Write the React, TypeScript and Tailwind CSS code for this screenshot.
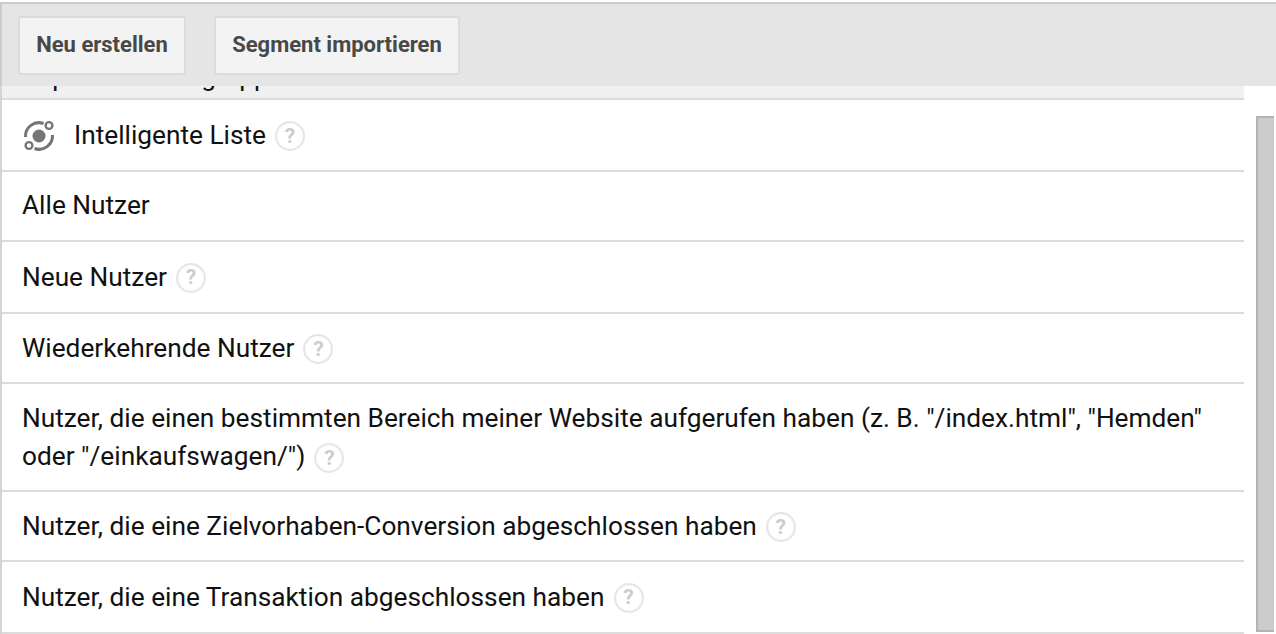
import React from "react";

const HelpIcon: React.FC = () => (
  <span className="ml-[9px] inline-flex h-[30px] w-[30px] shrink-0 items-center justify-center rounded-full border-2 border-[#e6e6e6] bg-white align-middle text-[21px] font-bold leading-none text-[#cccccc] shadow-[inset_0_0_2px_#eeeeee]">
    ?
  </span>
);

const SmartListIcon: React.FC = () => (
  <svg width="34" height="34" viewBox="0 0 34 34" fill="none" className="mr-[18px] shrink-0">
    <circle cx="17" cy="17" r="6.5" fill="#757575" />
    <path d="M3.5 18a13.5 13.5 0 0 1 18-13.5" stroke="#757575" strokeWidth="3" />
    <path d="M30.5 16a13.5 13.5 0 0 1-18 13.5" stroke="#757575" strokeWidth="3" />
    <circle cx="27" cy="6.5" r="3.4" stroke="#757575" strokeWidth="2.4" fill="white" />
    <circle cx="7" cy="26.5" r="3.4" stroke="#757575" strokeWidth="2.4" fill="white" />
  </svg>
);

const Row: React.FC<{ h: string; children: React.ReactNode }> = ({ h, children }) => (
  <div className={`flex items-center border-b-2 border-[#dcdcdc] pl-[20px] text-[26.25px] text-[#111111] ${h}`}>
    {children}
  </div>
);

export default function App() {
  return (
    <div className="h-[634px] w-[1276px] overflow-hidden bg-white pt-[2px] font-['Roboto',sans-serif]">
      {/* Toolbar */}
      <div className="flex h-[84px] items-start gap-[28px] border-t-2 border-l-2 border-[#cccccc] bg-[#e5e5e5] pl-[16px] pt-[12px]">
        <button className="h-[59px] w-[168px] rounded-[3px] border-2 border-[#dcdcdc] bg-[#f3f3f3] pb-[2px] text-[22px] font-bold text-[#484848]">
          Neu erstellen
        </button>
        <button className="h-[59px] w-[246px] rounded-[3px] border-2 border-[#dcdcdc] bg-[#f3f3f3] pb-[2px] text-[22px] font-bold text-[#484848]">
          Segment importieren
        </button>
      </div>

      <div className="flex">
        {/* List */}
        <div className="w-[1244px] shrink-0 border-l-2 border-[#d4d4d4]">
          <div className="h-[14px] overflow-hidden border-b-2 border-[#dcdcdc] bg-[#f0f0f0] pl-[20px] text-[26.25px] leading-[30px] text-[#111111]">
            <div className="-mt-[24px]">Importierte Zielgruppe</div>
          </div>
          <Row h="h-[72px] pt-[2px]">
            <SmartListIcon />
            Intelligente Liste
            <HelpIcon />
          </Row>
          <Row h="h-[70px]">Alle Nutzer</Row>
          <Row h="h-[72px] pt-[1px]">
            Neue Nutzer
            <HelpIcon />
          </Row>
          <Row h="h-[70px] pt-[2px]">
            Wiederkehrende Nutzer
            <HelpIcon />
          </Row>
          <div className="flex h-[108px] items-center border-b-2 border-[#dcdcdc] pl-[20px] pr-[30px] text-[26.25px] leading-[38px] text-[#111111]">
            <div>
              Nutzer, die einen bestimmten Bereich meiner Website aufgerufen haben (z. B. "/index.html", "Hemden" oder "/einkaufswagen/")
              <HelpIcon />
            </div>
          </div>
          <Row h="h-[70px] pt-[2px]">
            Nutzer, die eine Zielvorhaben-Conversion abgeschlossen haben
            <HelpIcon />
          </Row>
          <Row h="h-[72px] pt-[1px]">
            Nutzer, die eine Transaktion abgeschlossen haben
            <HelpIcon />
          </Row>
        </div>

        {/* Scrollbar */}
        <div className="ml-[12px] mt-[30px] h-[516px] w-[18px] shrink-0 border-y-2 border-l-2 border-[#b3b3b3] bg-[#cccccc]" />
      </div>
    </div>
  );
}
